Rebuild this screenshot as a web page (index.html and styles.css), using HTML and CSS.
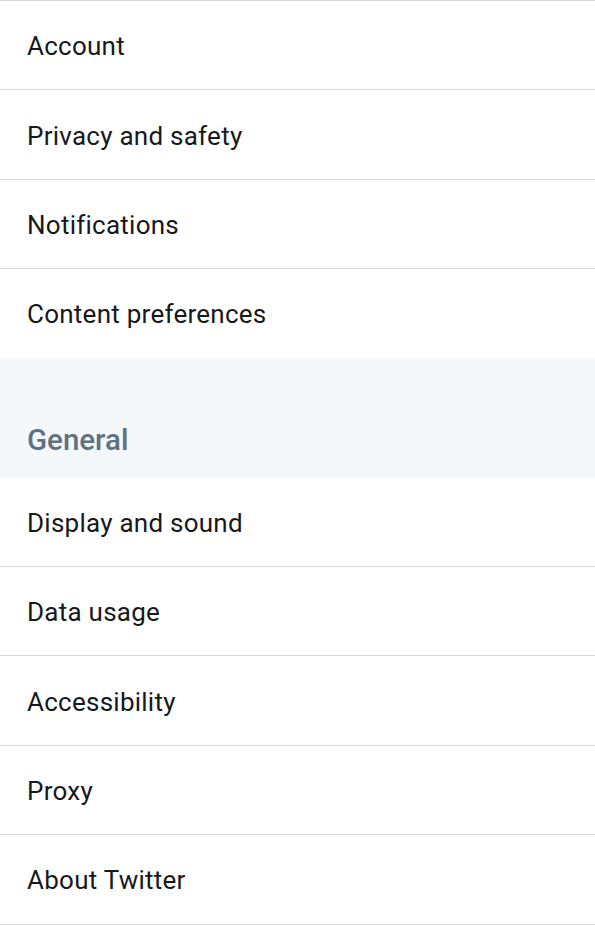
FILE: index.html
```html
<!DOCTYPE html>
<html>
<head>
<meta charset="utf-8">
<link rel="stylesheet" href="styles.css">
</head>
<body>
<div class="settings">
  <ul class="list first">
    <li class="item">Account</li>
    <li class="item">Privacy and safety</li>
    <li class="item">Notifications</li>
    <li class="item last">Content preferences</li>
  </ul>
  <div class="section">General</div>
  <ul class="list">
    <li class="item">Display and sound</li>
    <li class="item">Data usage</li>
    <li class="item">Accessibility</li>
    <li class="item">Proxy</li>
    <li class="item">About Twitter</li>
  </ul>
</div>
</body>
</html>
```

FILE: styles.css
```css
html, body {
  margin: 0;
  padding: 0;
  background: #ffffff;
}
.settings {
  width: 595px;
  font-family: Roboto, "Liberation Sans", sans-serif;
}
.list {
  list-style: none;
  margin: 0;
  padding: 0;
}
.list.first {
  border-top: 1px solid #d6d6d6;
}
.item {
  display: flex;
  align-items: center;
  padding: 2px 0 0 27px;
  box-sizing: content-box;
  height: 86.4px;
  font-size: 26px;
  letter-spacing: 0.25px;
  color: #17191b;
  border-bottom: 1px solid #d6d6d6;
}
.item.last {
  border-bottom: none;
}
.section {
  height: 120px;
  background: #f5f8fa;
  box-sizing: border-box;
  display: flex;
  align-items: flex-end;
  padding: 0 0 21px 27px;
  font-size: 29.5px;
  font-weight: 500;
  color: #5f7282;
}
```
